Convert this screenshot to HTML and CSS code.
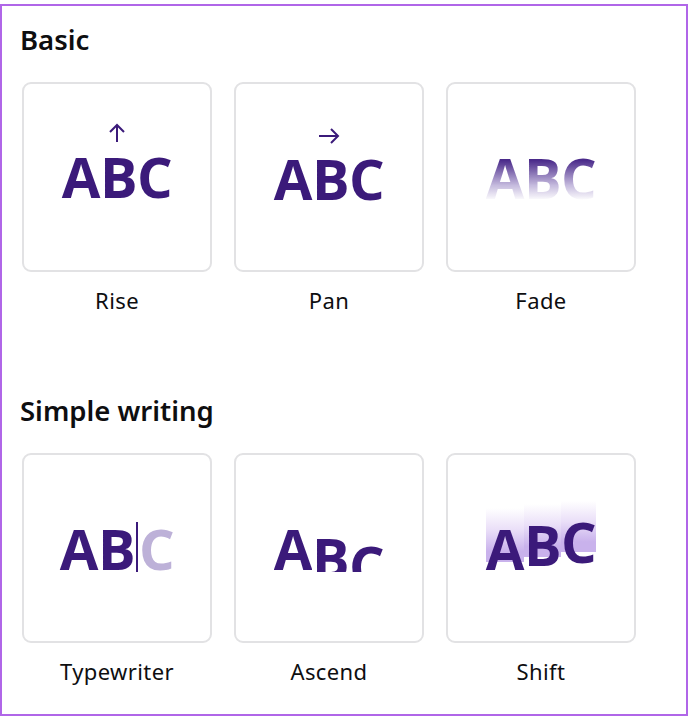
FILE: index.html
```html
<!DOCTYPE html>
<html>
<head>
<meta charset="utf-8">
<link rel="stylesheet" href="styles.css">
</head>
<body>
<div class="panel">
  <section class="group">
    <h2 class="title">Basic</h2>
    <div class="grid">
      <div class="item">
        <div class="card">
          <div class="stack">
            <svg class="arrow-up" width="18" height="20" viewBox="0 0 18 20"><path d="M9 19V2M2 9L9 2L16 9" fill="none" stroke="#3b1a7a" stroke-width="2"/></svg>
            <span class="abc">ABC</span>
          </div>
        </div>
        <div class="label">Rise</div>
      </div>
      <div class="item">
        <div class="card">
          <div class="stack pan">
            <svg class="arrow-right" width="22" height="16" viewBox="0 0 22 16"><path d="M1 8H20M13 1L20 8L13 15" fill="none" stroke="#3b1a7a" stroke-width="2"/></svg>
            <span class="abc">ABC</span>
          </div>
        </div>
        <div class="label">Pan</div>
      </div>
      <div class="item">
        <div class="card">
          <span class="abc fade">ABC</span>
        </div>
        <div class="label">Fade</div>
      </div>
    </div>
  </section>
  <section class="group second">
    <h2 class="title">Simple writing</h2>
    <div class="grid">
      <div class="item">
        <div class="card">
          <span class="abc">AB<span class="cursor"></span><span class="light">C</span></span>
        </div>
        <div class="label">Typewriter</div>
      </div>
      <div class="item">
        <div class="card">
          <span class="abc ascend"><span class="clip"><span class="ch">A</span></span><span class="clip"><span class="ch down1">B</span></span><span class="clip"><span class="ch down2">C</span></span></span>
        </div>
        <div class="label">Ascend</div>
      </div>
      <div class="item">
        <div class="card">
          <span class="abc shift"><span class="sh s1">A</span><span class="sh s2">B</span><span class="sh s3">C</span></span>
        </div>
        <div class="label">Shift</div>
      </div>
    </div>
  </section>
</div>
</body>
</html>
```
FILE: styles.css
```css
html, body {
  margin: 0;
  padding: 0;
  background: #ffffff;
}
body {
  padding-top: 4px;
  font-family: "Noto Sans", "Open Sans", sans-serif;
  color: #0e0e10;
}
.panel {
  box-sizing: border-box;
  width: 688px;
  height: 712px;
  border: 2px solid #b066e8;
  padding: 17px 18px 0 18px;
}
.title {
  margin: 0;
  font-size: 27.5px;
  font-weight: 600;
  line-height: 34px;
  color: #0e0e10;
}
.group.second {
  margin-top: 80px;
}
.grid {
  display: flex;
  gap: 22px;
  margin-top: 25px;
  padding-left: 2px;
}
.item {
  width: 190px;
}
.card {
  box-sizing: border-box;
  width: 190px;
  height: 190px;
  border: 2px solid #e2e2e4;
  border-radius: 9px;
  display: flex;
  align-items: center;
  justify-content: center;
}
.label {
  text-align: center;
  font-size: 22px;
  letter-spacing: 0.4px;
  line-height: 28px;
  margin-top: 14px;
  color: #0e0e10;
}
.stack {
  display: flex;
  flex-direction: column;
  align-items: center;
  margin-top: -28px;
}
.stack.pan {
  margin-top: -20px;
}
.arrow-up {
  display: block;
  margin-bottom: 5px;
}
.arrow-right {
  display: block;
  margin-bottom: 6px;
}
.abc {
  font-family: "Open Sans", sans-serif;
  font-weight: 700;
  font-size: 56px;
  line-height: 56px;
  color: #3b1a7a;
  letter-spacing: -0.5px;
  display: inline-flex;
  align-items: flex-end;
}
.fade {
  background: linear-gradient(to bottom, #4a2a8a 20%, rgba(90, 60, 160, 0.35) 65%, rgba(255, 255, 255, 0) 92%);
  -webkit-background-clip: text;
  background-clip: text;
  color: transparent;
}
.cursor {
  display: inline-block;
  width: 2px;
  height: 50px;
  background: #3b1a7a;
  margin: 0 1px 4px 1px;
}
.light {
  color: #bdb1d8;
}
.ascend .clip {
  display: inline-block;
  overflow: hidden;
  height: 48px;
}
.ascend .ch {
  display: block;
  line-height: 56px;
  margin-top: -4px;
}
.ascend .down1 {
  transform: translateY(9px);
}
.ascend .down2 {
  transform: translateY(17px);
}
.shift {
  align-items: flex-start;
  height: 76px;
  margin-top: -18px;
}
.sh {
  display: block;
  padding-top: 12px;
  line-height: 56px;
  background: linear-gradient(to bottom, rgba(255,255,255,0) 0%, #eadff8 40%, #c9b2ec 80%);
  background-repeat: no-repeat;
}
.s1 {
  margin-top: 7px;
  background-size: 100% 80%;
}
.s2 {
  margin-top: 3px;
  background-size: 100% 78%;
}
.s3 {
  margin-top: 0;
  background-size: 100% 75%;
}
```
